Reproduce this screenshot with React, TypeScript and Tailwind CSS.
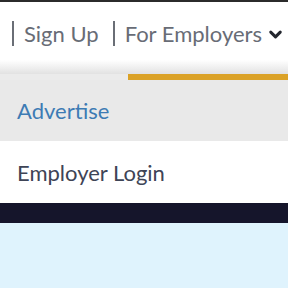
import { ChevronDown } from 'lucide-react';

const App = () => {
  return (
    <div className="w-[288px] h-[288px] overflow-hidden bg-[#dff3fd] font-['Lato','Liberation_Sans',sans-serif]">
      <div className="h-[2px] bg-[#2b2b2b]" />
      <nav className="h-[58px] bg-white flex items-center pt-[4px] pl-[12px] text-[22px] text-[#686c76]">
        <span className="w-[2px] h-[25px] bg-[#6a6e76]" />
        <span className="ml-[10px]">Sign Up</span>
        <span className="ml-[14px] w-[2px] h-[25px] bg-[#6a6e76]" />
        <span className="ml-[10px]">For Employers</span>
        <ChevronDown className="ml-[4px] mt-[3px] w-[19px] h-[19px] text-[#23262e]" strokeWidth={3.8} />
      </nav>
      <div className="h-[14px] bg-gradient-to-b from-white to-[#e2e2e2]" />
      <div className="h-[6px] bg-[#ebebeb] flex">
        <div className="ml-[128px] flex-1 bg-[#dba227]" />
      </div>
      <div className="h-[61px] bg-[#e9e9e9] flex items-center px-[17px] text-[22px] text-[#3d7bb4]">
        Advertise
      </div>
      <div className="h-[62px] bg-white flex items-center px-[17px] text-[22px] text-[#3e4456]">
        Employer Login
      </div>
      <div className="h-[20px] bg-[#15152b]" />
    </div>
  );
};

export default App;
